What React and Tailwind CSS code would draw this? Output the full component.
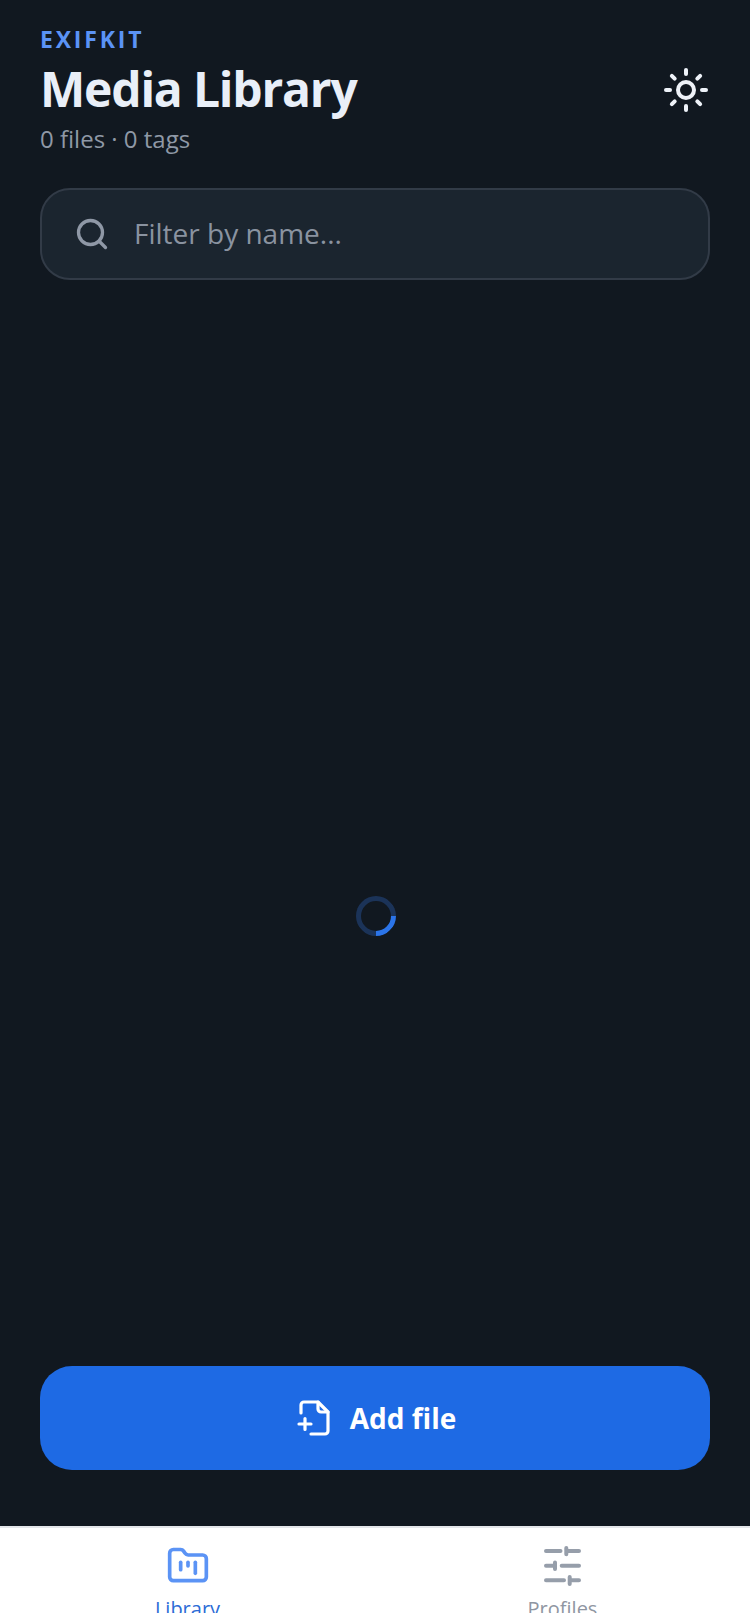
import React from "react";
import { Sun, Search, FolderKanban } from "lucide-react";

function FileAdd() {
  return (
    <svg width="34" height="38" viewBox="0 0 34 38" fill="none" stroke="white" strokeWidth="3.2" strokeLinecap="round" strokeLinejoin="round">
      <path d="M4 14V6a3 3 0 0 1 3-3h14l10 10v19a3 3 0 0 1-3 3H14" />
      <path d="M21 3v7a3 3 0 0 0 3 3h7" />
      <path d="M2 25h12M8 19.500v11" />
    </svg>
  );
}

function Sliders() {
  return (
    <svg width="37" height="40" viewBox="0 0 37 40" fill="none" stroke="#969eaa" strokeWidth="4" strokeLinecap="round" className="shrink-0 my-[2px]">
      <path d="M2 5H16.500M22.300 2V8.200M22.300 5H35" />
      <path d="M2 19.700H11M11 16.500V23M17.700 19.700H35" />
      <path d="M2 34.300H20M25.700 31V38M25.700 34.300H35" />
    </svg>
  );
}

export default function App() {
  return (
    <div className="h-[1624px] w-[750px] flex flex-col bg-[#111820] font-['Open_Sans',sans-serif] overflow-hidden">
      <main className="flex-1 flex flex-col px-10 pt-[23px] pb-[56px]">
        <header className="flex items-center justify-between">
          <div>
            <div className="text-[23px] leading-[32px] font-bold tracking-[2.8px] text-[#5b93f5]">EXIFKIT</div>
            <h1 className="mt-[1px] text-[48px] leading-[65px] font-bold tracking-[-1.2px] text-[#e9eff8]">Media Library</h1>
            <div className="text-[24px] leading-[36px] text-[#8f98a6]">0 files · 0 tags</div>
          </div>
          <button className="mt-[-1px]">
            <Sun size={48} strokeWidth={2} color="#eef2f8" />
          </button>
        </header>
        <div className="mt-[31px] h-[92px] rounded-[30px] border-2 border-[#323b47] bg-[#1b252f] flex items-center pl-[32px] gap-[24px]">
          <Search size={36} strokeWidth={2.2} color="#8f98a6" />
          <span className="text-[28px] text-[#8a93a0] mb-[2px]">Filter by name...</span>
        </div>
        <div className="flex-1 flex items-center justify-center pt-[186px] pl-[2px]">
          <div className="w-10 h-10 rounded-full border-[5px] border-[#1b3358] border-r-[#2b74e8] rotate-45"></div>
        </div>
        <button className="h-[104px] rounded-[32px] bg-[#1e6ae4] flex items-center justify-center gap-[19px] pl-[3px]">
          <FileAdd />
          <span className="text-[28px] font-bold text-white mb-[1px]">Add file</span>
        </button>
      </main>
      <nav className="h-[98px] shrink-0 bg-white border-t-2 border-[#e4e6ea] flex pt-[16px]">
        <div className="flex-1 flex flex-col items-center h-[69px] overflow-hidden">
          <FolderKanban size={44} strokeWidth={2} color="#5b93f5" className="shrink-0" />
          <span className="mt-[7px] text-[20px] leading-[28px] text-[#2b6bd6]">Library</span>
        </div>
        <div className="flex-1 flex flex-col items-center h-[69px] overflow-hidden">
          <Sliders />
          <span className="mt-[7px] text-[20px] leading-[28px] text-[#8f96a2]">Profiles</span>
        </div>
      </nav>
    </div>
  );
}
